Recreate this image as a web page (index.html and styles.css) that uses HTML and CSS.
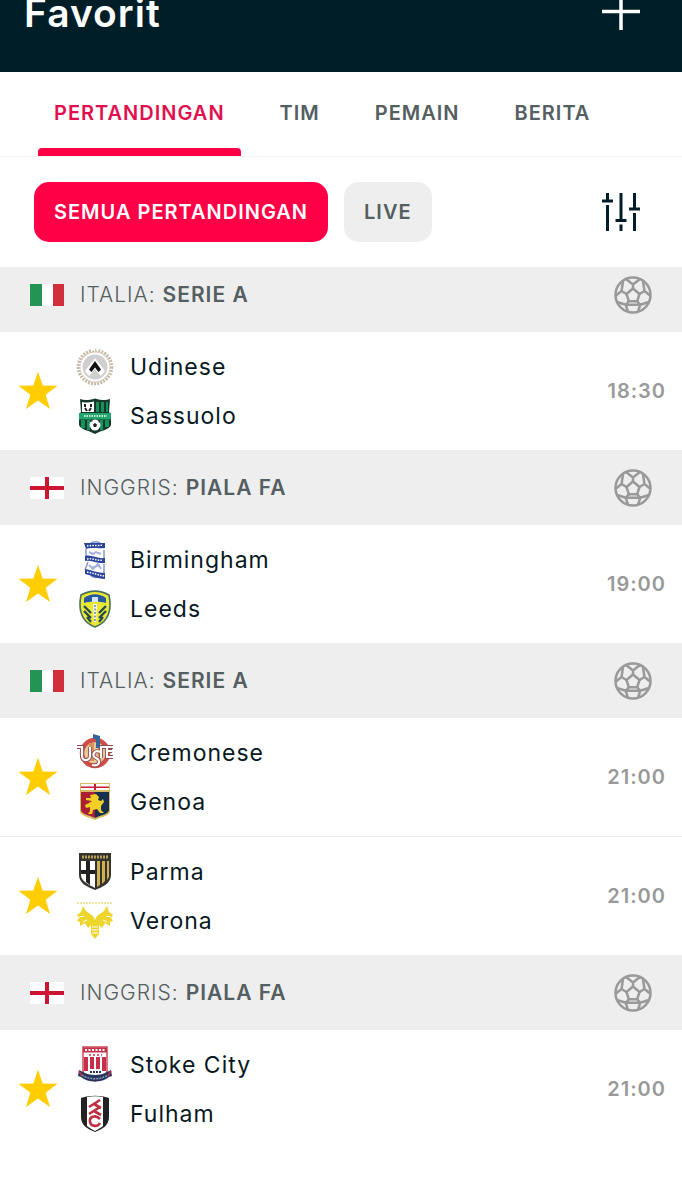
FILE: index.html
```html
<!DOCTYPE html>
<html lang="id">
<head>
  <meta charset="UTF-8">
  <meta name="viewport" content="width=device-width, initial-scale=1">
  <title>Favorit</title>
  <link rel="stylesheet" href="styles.css">
</head>
<body>

  <!-- Shared icons -->
  <svg class="sprite" aria-hidden="true">
    <symbol id="star" viewBox="0 0 40 40">
      <path fill="#ffcd00" d="M20 .8l4.700 13.700 14.800.2-11.800 9 4.300 14.300L20 29.600 8 38l4.300-14.300L.5 14.700l14.800-.2z"/>
    </symbol>
    <symbol id="ball" viewBox="0 0 38 38">
      <g fill="none" stroke="#999" stroke-width="2.500" stroke-linejoin="round">
        <circle cx="19" cy="19" r="17.500"/>
        <path d="M19 12.500l6.500 5.500-2.300 7.200h-8.400L12.500 18z"/>
        <path d="M19 12.500V8.500M12 3l7 5.500L26 3M25.500 18l5-3M29 5.500l1.500 9.500 5.500 4.500M23.200 25.200l3 3.600M35 26l-8.800 2.800-2.200 7M14.800 25.200l-3 3.600M14 35.800l-2.200-7L3 26M12.500 18l-5-3M2 19.500L7.500 15 9 5.500M11.800 28.800h14.400"/>
      </g>
    </symbol>
    <symbol id="flag-it" viewBox="0 0 34 22">
      <path fill="#fff" d="M0 0h34v22H0z"/>
      <path fill="#249454" d="M0 0h12v22H0z"/>
      <path fill="#d22f3c" d="M23 0h11v22H23z"/>
    </symbol>
    <symbol id="flag-en" viewBox="0 0 34 22">
      <path fill="#fff" d="M0 0h34v22H0z"/>
      <path fill="#cc1433" d="M15 0h4v22h-4zM0 9h34v4H0z"/>
    </symbol>
  </svg>

  <header class="header">
    <h1 class="title">Favorit</h1>
    <button class="icon-btn add" aria-label="Tambah">
      <svg width="38" height="38" viewBox="0 0 38 38"><path stroke="#fff" stroke-width="3.500" d="M0 17.500h38M19 0v36"/></svg>
    </button>
  </header>

  <nav class="tabs">
    <a class="tab active" href="#pertandingan">PERTANDINGAN</a>
    <a class="tab" href="#tim">TIM</a>
    <a class="tab" href="#pemain">PEMAIN</a>
    <a class="tab" href="#berita">BERITA</a>
  </nav>

  <div class="filters">
    <button class="chip selected">SEMUA PERTANDINGAN</button>
    <button class="chip">LIVE</button>
    <button class="icon-btn settings" aria-label="Filter">
      <svg width="38" height="38" viewBox="0 0 38 38"><path stroke="#001e28" stroke-width="3" fill="none" d="M5.500 0v8M0 8h11M5.500 12v26M19 0v27M13.500 27.500h11M19 31.500V38M32.500 0v16M27 16h11M32.500 20v18"/></svg>
    </button>
  </div>

  <main class="list">
    <section>
      <h2 class="league">
        <svg class="flag"><use href="#flag-it"/></svg>
        <span class="league-name">ITALIA: <b>SERIE A</b></span>
        <svg class="ball"><use href="#ball"/></svg>
      </h2>
      <article class="match">
        <button class="icon-btn fav" aria-label="Favorit"><svg class="star"><use href="#star"/></svg></button>
        <div class="teams">
          <div class="team">
            <!-- Udinese -->
            <svg class="crest" viewBox="0 0 38 38">
              <circle cx="19" cy="19" r="16.500" fill="none" stroke="#c4b7a2" stroke-width="3.600" stroke-dasharray="1.800 1.300"/>
              <circle cx="19" cy="19" r="15" fill="none" stroke="#d5cabb" stroke-width="1.200" stroke-dasharray="2 1"/>
              <circle cx="19" cy="19" r="12.500" fill="#cfcfd1"/>
              <path fill="#fff" d="M19 10l10 13-4 5-6-7-6 7-4-5z"/>
              <path fill="#111" d="M19 13l6 8.500-2.500 2.500-3.500-4.500-3.500 4.500-2.500-2.500z"/>
              <path stroke="#fff" stroke-width="2" d="M15 1.500h3M20 1.500h3"/>
            </svg>
            <span>Udinese</span>
          </div>
          <div class="team">
            <!-- Sassuolo -->
            <svg class="crest" viewBox="0 0 38 38">
              <path fill="#17382c" d="M4 2c5 2 9 1 15-.5C25 3 29 4 34 2l-1 13 2 2v11c-2 5-9 5-16 9-7-4-14-4-16-9V17l2-2z"/>
              <path fill="#fff" d="M6 5c4 1 8 .500 12-.500V15H6z"/>
              <path fill="#14925a" d="M20 5h3v10h-3zM25 5h3v10h-3zM30 5h2v10h-2zM5 23h4v8H5zM11 23h3v10h-3zM24 23h3v10h-3zM29 23h4v7h-4z"/>
              <path fill="#20a56c" d="M3 16h32v6.500H3z"/>
              <path stroke="#c8efdc" stroke-width="2" stroke-dasharray="1.500 1" d="M8 19h23"/>
              <path stroke="#222" stroke-width="2" d="M9 7v3M9 11l2 3M15 7v3M15 11l-2 3"/>
              <circle cx="19" cy="28" r="5.500" fill="#fff"/>
              <path fill="#222" d="M19 26l2 1.500-.8 2.500h-2.400l-.8-2.500zM14 25l2-2 1 1zM22 23l2 2-1 1zM14 30l2 3-2-1zM24 30l-2 3 2-1z"/>
            </svg>
            <span>Sassuolo</span>
          </div>
        </div>
        <time class="time">18:30</time>
      </article>
    </section>

    <section>
      <h2 class="league">
        <svg class="flag"><use href="#flag-en"/></svg>
        <span class="league-name">INGGRIS: <b>PIALA FA</b></span>
        <svg class="ball"><use href="#ball"/></svg>
      </h2>
      <article class="match">
        <button class="icon-btn fav" aria-label="Favorit"><svg class="star"><use href="#star"/></svg></button>
        <div class="teams">
          <div class="team">
            <!-- Birmingham -->
            <svg class="crest" viewBox="0 0 38 38">
              <path fill="none" stroke="#8796cb" stroke-width="1.500" d="M14 3c3-3 8-3 11 0M10 8v8M28 9v9M12 21l-3 8M28 23v9M15 35c3 2 7 2 9 0"/>
              <path fill="#2b4399" d="M8 2h21v5c-7 1-14-1-19 1zM9 15c6-2 12 3 20 2v5c-8 1-13-3-20-2zM9 28c7 1 12 4 20 4v6c-8 0-14-4-20-5z"/>
              <path fill="none" stroke="#fff" stroke-width="1.500" stroke-dasharray="1.500 1.200" d="M11 5c5-1 11 0 16-1M11 18c6-1 10 2 16 1M11 31c6 1 11 3 17 4"/>
              <path fill="none" stroke="#a7b2dc" stroke-width="2" d="M13 11l4 2 3-2 5 2M13 24l4 4 5-5 3 5M24 24l-9 3"/>
            </svg>
            <span>Birmingham</span>
          </div>
          <div class="team">
            <!-- Leeds -->
            <svg class="crest" viewBox="0 0 38 38">
              <path fill="#e9e834" stroke="#48705d" stroke-width="1.600" d="M5 5C14 0 24 0 33 5c3 15-1 27-14 32C6 32 2 20 5 5z"/>
              <path fill="#2558a0" d="M8 8c7-5 15-5 22 0v5c-7-2-15-2-22 0z"/>
              <path fill="#d5e4f4" d="M16 7h6v5h-6z"/>
              <path fill="#fff" d="M17 14h4l-1 18h-2z"/>
              <path stroke="#274b55" stroke-width="2.400" d="M8 16l7 7M8 21l7 7M11 27l4 5M30 16l-7 7M30 21l-7 7M27 27l-4 5"/>
              <path stroke="#60809c" stroke-width="1.500" stroke-dasharray="2 1.500" d="M19 15v16"/>
            </svg>
            <span>Leeds</span>
          </div>
        </div>
        <time class="time">19:00</time>
      </article>
    </section>

    <section>
      <h2 class="league">
        <svg class="flag"><use href="#flag-it"/></svg>
        <span class="league-name">ITALIA: <b>SERIE A</b></span>
        <svg class="ball"><use href="#ball"/></svg>
      </h2>
      <article class="match">
        <button class="icon-btn fav" aria-label="Favorit"><svg class="star"><use href="#star"/></svg></button>
        <div class="teams">
          <div class="team">
            <!-- Cremonese -->
            <svg class="crest" viewBox="0 0 38 38">
              <circle cx="19" cy="19" r="13" fill="#e8c79b" stroke="#cf4d48" stroke-width="4.500"/>
              <path fill="#34659a" d="M17 0l7 2v12h-4V5h-3z"/>
              <path fill="#d8935a" d="M13 9h5v18h-5zM22 14h3v12h-3z"/>
              <g fill="none" stroke="#8f4a48" stroke-width="4">
                <path id="cremo" d="M1 13h5v9c0 6 8 5 8 0v-9M24 18c-6-3-9 4-4 6s4 9-4 7M24 13h13M31 13v10h6M31 17h5M25 13v11"/>
              </g>
              <use href="#cremo" fill="none" stroke="#fff" stroke-width="2.200"/>
            </svg>
            <span>Cremonese</span>
          </div>
          <div class="team">
            <!-- Genoa -->
            <svg class="crest" viewBox="0 0 38 38">
              <path fill="#d7ba62" d="M4 0h30v28c0 5-9 6-15 9C13 34 4 33 4 28z"/>
              <path fill="#fff" d="M5 1h28v6H5z"/>
              <path fill="#c62035" d="M18 1h2v6h-2zM5 3.500h28V5H5z"/>
              <path fill="#a82032" d="M5 9h14v26C13 32 5 31 5 27z"/>
              <path fill="#17304f" d="M19 9h14v18c0 4-8 5-14 8z"/>
              <path fill="#f2cf25" d="M14 12l6-1 3 3-1 3 3 1 2-2 1 3-3 4v4l3 3h-4l-3-4-4 1-1 4h-4l2-3v-4l-4 1-1-3 4-2 3-2-6-1v-2h5z"/>
            </svg>
            <span>Genoa</span>
          </div>
        </div>
        <time class="time">21:00</time>
      </article>
      <article class="match">
        <button class="icon-btn fav" aria-label="Favorit"><svg class="star"><use href="#star"/></svg></button>
        <div class="teams">
          <div class="team">
            <!-- Parma -->
            <svg class="crest" viewBox="0 0 38 38">
              <path fill="#35332e" d="M3 0h32v22c0 8-8 12-16 15C11 34 3 30 3 22z"/>
              <path fill="#fff" d="M5 8h14v27C12 31 5 28 5 22z"/>
              <path fill="#222" d="M10 8h4v24l-4-3zM5 17h14v4H5z"/>
              <path fill="#d0b055" d="M21 8h3v24l-3 2zM26 8h3v20l-3 3zM31 8h2v16l-2 3z"/>
              <path stroke="#b79f5c" stroke-width="3" stroke-dasharray="2 1" d="M6 4h27"/>
            </svg>
            <span>Parma</span>
          </div>
          <div class="team">
            <!-- Verona -->
            <svg class="crest" viewBox="0 0 38 38">
              <path stroke="#eee5a1" stroke-width="2" stroke-dasharray="2 1" d="M1 1h36"/>
              <path fill="#eed52c" d="M7 4l3 5 7 5 2 4 2-4 7-5 3-5 2 6 4 3-2 3 2 3-3 1v4l-5-3-3 5-3-3v9l-4 5-4-5v-9l-3 3-3-5-5 3v-4l-3-1 2-3-2-3 4-3z"/>
              <path stroke="#fff" stroke-width="1" d="M16 25h6M16 28h6M16 31h6M3 15l5-1M35 15l-5-1M7 20l4-2M31 20l-4-2"/>
            </svg>
            <span>Verona</span>
          </div>
        </div>
        <time class="time">21:00</time>
      </article>
    </section>

    <section>
      <h2 class="league">
        <svg class="flag"><use href="#flag-en"/></svg>
        <span class="league-name">INGGRIS: <b>PIALA FA</b></span>
        <svg class="ball"><use href="#ball"/></svg>
      </h2>
      <article class="match">
        <button class="icon-btn fav" aria-label="Favorit"><svg class="star"><use href="#star"/></svg></button>
        <div class="teams">
          <div class="team">
            <!-- Stoke City -->
            <svg class="crest" viewBox="0 0 38 38">
              <path fill="#fff" stroke="#c84957" stroke-width="1.500" d="M7 1h24v24c0 5-6 7-12 10C13 32 7 30 7 25z"/>
              <path stroke="#c7304b" stroke-width="5" d="M7 4h24"/>
              <path stroke="#fff" stroke-width="2" stroke-dasharray="2 1.500" d="M9 4h20"/>
              <path stroke="#c7304b" stroke-width="1.500" stroke-dasharray="2 2" d="M13 9h13"/>
              <path fill="#c7304b" d="M8 11h4v14H8zM14 11h4v12h-4zM20 11h4v12h-4zM26 11h4v14h-4z"/>
              <path stroke="#26355c" stroke-width="2" stroke-dasharray="2 1" d="M14 26h11"/>
              <path fill="#26355c" d="M3 24l4 2c6 4 18 4 24 0l4-2 1 6-3 1c-7 6-21 6-28 0l-3-1z"/>
              <path fill="none" stroke="#8f9ab8" stroke-width="1.500" stroke-dasharray="2 1" d="M6 29c7 5 19 5 26 0"/>
              <path stroke="#c7304b" stroke-width="1.500" d="M3 25l3 5M35 25l-3 5"/>
            </svg>
            <span>Stoke City</span>
          </div>
          <div class="team">
            <!-- Fulham -->
            <svg class="crest" viewBox="0 0 38 38">
              <path fill="#222" d="M5 3c9-3 19-3 28 0v19c0 8-6 12-14 15C11 34 5 30 5 22z"/>
              <path fill="#fff" d="M11 2c5-1 11-1 16 0v29c-2 2-5 3-8 5-3-2-6-3-8-5z"/>
              <path fill="none" stroke="#bd3042" stroke-width="2.600" d="M13 12l11-7M18 9l7 4M13 19l11-7M18 16l7 4M24 24c-5-5-11-2-10 3s8 5 10 1"/>
            </svg>
            <span>Fulham</span>
          </div>
        </div>
        <time class="time">21:00</time>
      </article>
    </section>
  </main>

</body>
</html>
```

FILE: styles.css
```css
* {
  box-sizing: border-box;
}
body {
  margin: 0;
  background: #fff;
  color: #07191f;
  font-family: Inter, "Liberation Sans", sans-serif;
  font-size: 20px;
  letter-spacing: 1px;
}
button {
  font: inherit;
  letter-spacing: inherit;
  border: none;
  cursor: pointer;
}
svg {
  display: block;
}
.sprite {
  position: absolute;
  width: 0;
  height: 0;
}
.icon-btn {
  padding: 0;
  background: none;
}

/* Header */
.header {
  display: flex;
  justify-content: space-between;
  align-items: center;
  height: 72px;
  padding: 0 42px 46px 24px;
  background: #001e28;
}
.title {
  margin: 0;
  color: #fff;
  font-size: 39px;
  font-weight: 600;
  line-height: 26px;
}

/* Tabs */
.tabs {
  display: flex;
  gap: 23px;
  height: 85px;
  padding: 0 38px;
  border-bottom: 1px solid #f2f2f2;
}
.tab {
  display: flex;
  flex-direction: column;
  padding: 0 16px;
  color: #555e61;
  font-weight: 600;
  line-height: 82px;
  text-decoration: none;
}
.tab.active {
  color: #e0104e;
}
.tab.active::after {
  content: "";
  height: 8px;
  margin: -6px -16px 0;
  border-radius: 4px 4px 0 0;
  background: #ff0046;
}

/* Filters */
.filters {
  position: relative;
  z-index: 1;
  display: flex;
  align-items: center;
  gap: 16px;
  height: 110px;
  padding: 0 42px 0 34px;
  background: #fff;
}
.chip {
  height: 60px;
  padding: 0 20px;
  border-radius: 15px;
  background: #eee;
  color: #555e61;
  font-weight: 600;
}
.chip.selected {
  background: #ff0046;
  color: #fff;
}
.settings {
  margin-left: auto;
}

/* Match list */
.list {
  margin-top: -10px;
}
.league {
  display: flex;
  align-items: center;
  height: 75px;
  margin: 0;
  padding: 0 30px;
  background: #eee;
  color: #555e61;
  font-size: 21px;
  font-weight: 300;
}
.league b {
  font-weight: 600;
}
.flag {
  width: 34px;
  height: 22px;
  margin-right: 16px;
}
.ball {
  width: 38px;
  height: 38px;
  margin-left: auto;
}
.match {
  display: flex;
  align-items: center;
  padding: 10px 16px 10px 18px;
}
.match + .match {
  border-top: 1px solid #eee;
}
.star {
  width: 40px;
  height: 40px;
}
.teams {
  flex: 1;
  padding-left: 18px;
}
.team {
  display: flex;
  align-items: center;
  gap: 16px;
  height: 49px;
  font-size: 23px;
}
.crest {
  width: 38px;
  height: 38px;
}
.time {
  color: #999;
  font-weight: 600;
}
```
